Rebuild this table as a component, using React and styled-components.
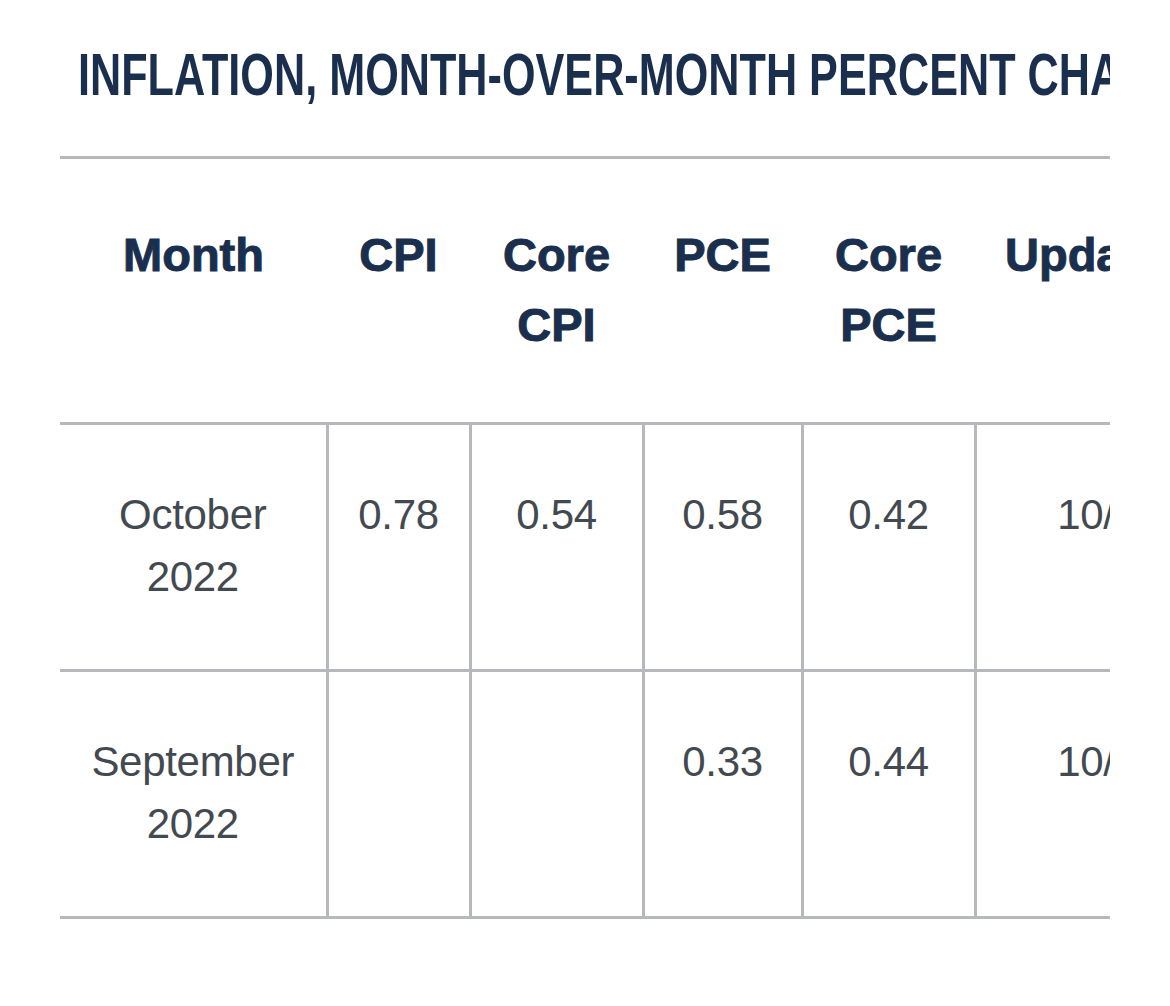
import React from 'react';
import styled, { createGlobalStyle } from 'styled-components';

const GlobalStyle = createGlobalStyle`
  body {
    margin: 0;
    background: #ffffff;
    font-family: "Liberation Sans", Arial, sans-serif;
  }
`;

const colors = {
  navy: '#1a2f4d',
  text: '#434950',
  rule: '#b6b8bb',
};

const Page = styled.div`
  padding: 40px 60px 0 60px;
`;

const Frame = styled.div`
  width: 1050px;
  overflow: hidden;
`;

const TitleBar = styled.div`
  padding: 0 0 46px 18px;
  border-bottom: 3px solid ${colors.rule};
  white-space: nowrap;
`;

// condensed headline: no condensed face installed, so squeeze the bold one
const Title = styled.h2`
  display: inline-block;
  margin: 0;
  font-family: "Liberation Sans", Arial, sans-serif;
  font-weight: 700;
  font-size: 60px;
  line-height: 70px;
  color: ${colors.navy};
  transform: scaleX(0.72);
  transform-origin: left center;
`;

const Table = styled.table`
  border-collapse: collapse;
  table-layout: fixed;
  width: 1285px;
`;

const Head = styled.th`
  padding: 61px ${(p) => p.$padRight || 6}px 62px 6px;
  font-family: "Liberation Sans", Arial, sans-serif;
  font-weight: 700;
  font-size: 47px;
  line-height: 70px;
  color: ${colors.navy};
  text-align: center;
  vertical-align: top;
  border-bottom: 3px solid ${colors.rule};
  -webkit-text-stroke: 1px ${colors.navy};
`;

const Cell = styled.td`
  padding: 59px 12px 61px;
  font-size: 42px;
  line-height: 62px;
  letter-spacing: -0.3px;
  color: ${colors.text};
  text-align: center;
  vertical-align: top;
  border-bottom: 3px solid ${colors.rule};
  border-left: ${(p) => (p.$first ? 'none' : `3px solid ${colors.rule}`)};
`;

const columns = [
  { key: 'month', label: <>Month</>, width: 267 },
  { key: 'cpi', label: <>CPI</>, width: 143 },
  { key: 'coreCpi', label: <>Core<br />CPI</>, width: 173 },
  { key: 'pce', label: <>PCE</>, width: 159 },
  { key: 'corePce', label: <>Core<br />PCE</>, width: 173 },
  { key: 'updated', label: <>Updated</>, width: 370, padRight: 128 },
];

const rows = [
  { month: 'October 2022', cpi: '0.78', coreCpi: '0.54', pce: '0.58', corePce: '0.42', updated: '10/28/2022' },
  { month: 'September 2022', cpi: '', coreCpi: '', pce: '0.33', corePce: '0.44', updated: '10/28/2022' },
];

const App = () => {
  return (
    <>
      <GlobalStyle />
      <Page>
        <Frame>
          <TitleBar>
            <Title>INFLATION, MONTH-OVER-MONTH PERCENT CHANGE</Title>
          </TitleBar>
          <Table>
            <colgroup>
              {columns.map((c) => (
                <col key={c.key} style={{ width: c.width }} />
              ))}
            </colgroup>
            <thead>
              <tr>
                {columns.map((c) => (
                  <Head key={c.key} $padRight={c.padRight}>{c.label}</Head>
                ))}
              </tr>
            </thead>
            <tbody>
              {rows.map((r) => (
                <tr key={r.month}>
                  {columns.map((c, i) => (
                    <Cell key={c.key} $first={i === 0}>{r[c.key]}</Cell>
                  ))}
                </tr>
              ))}
            </tbody>
          </Table>
        </Frame>
      </Page>
    </>
  );
};

export default App;
